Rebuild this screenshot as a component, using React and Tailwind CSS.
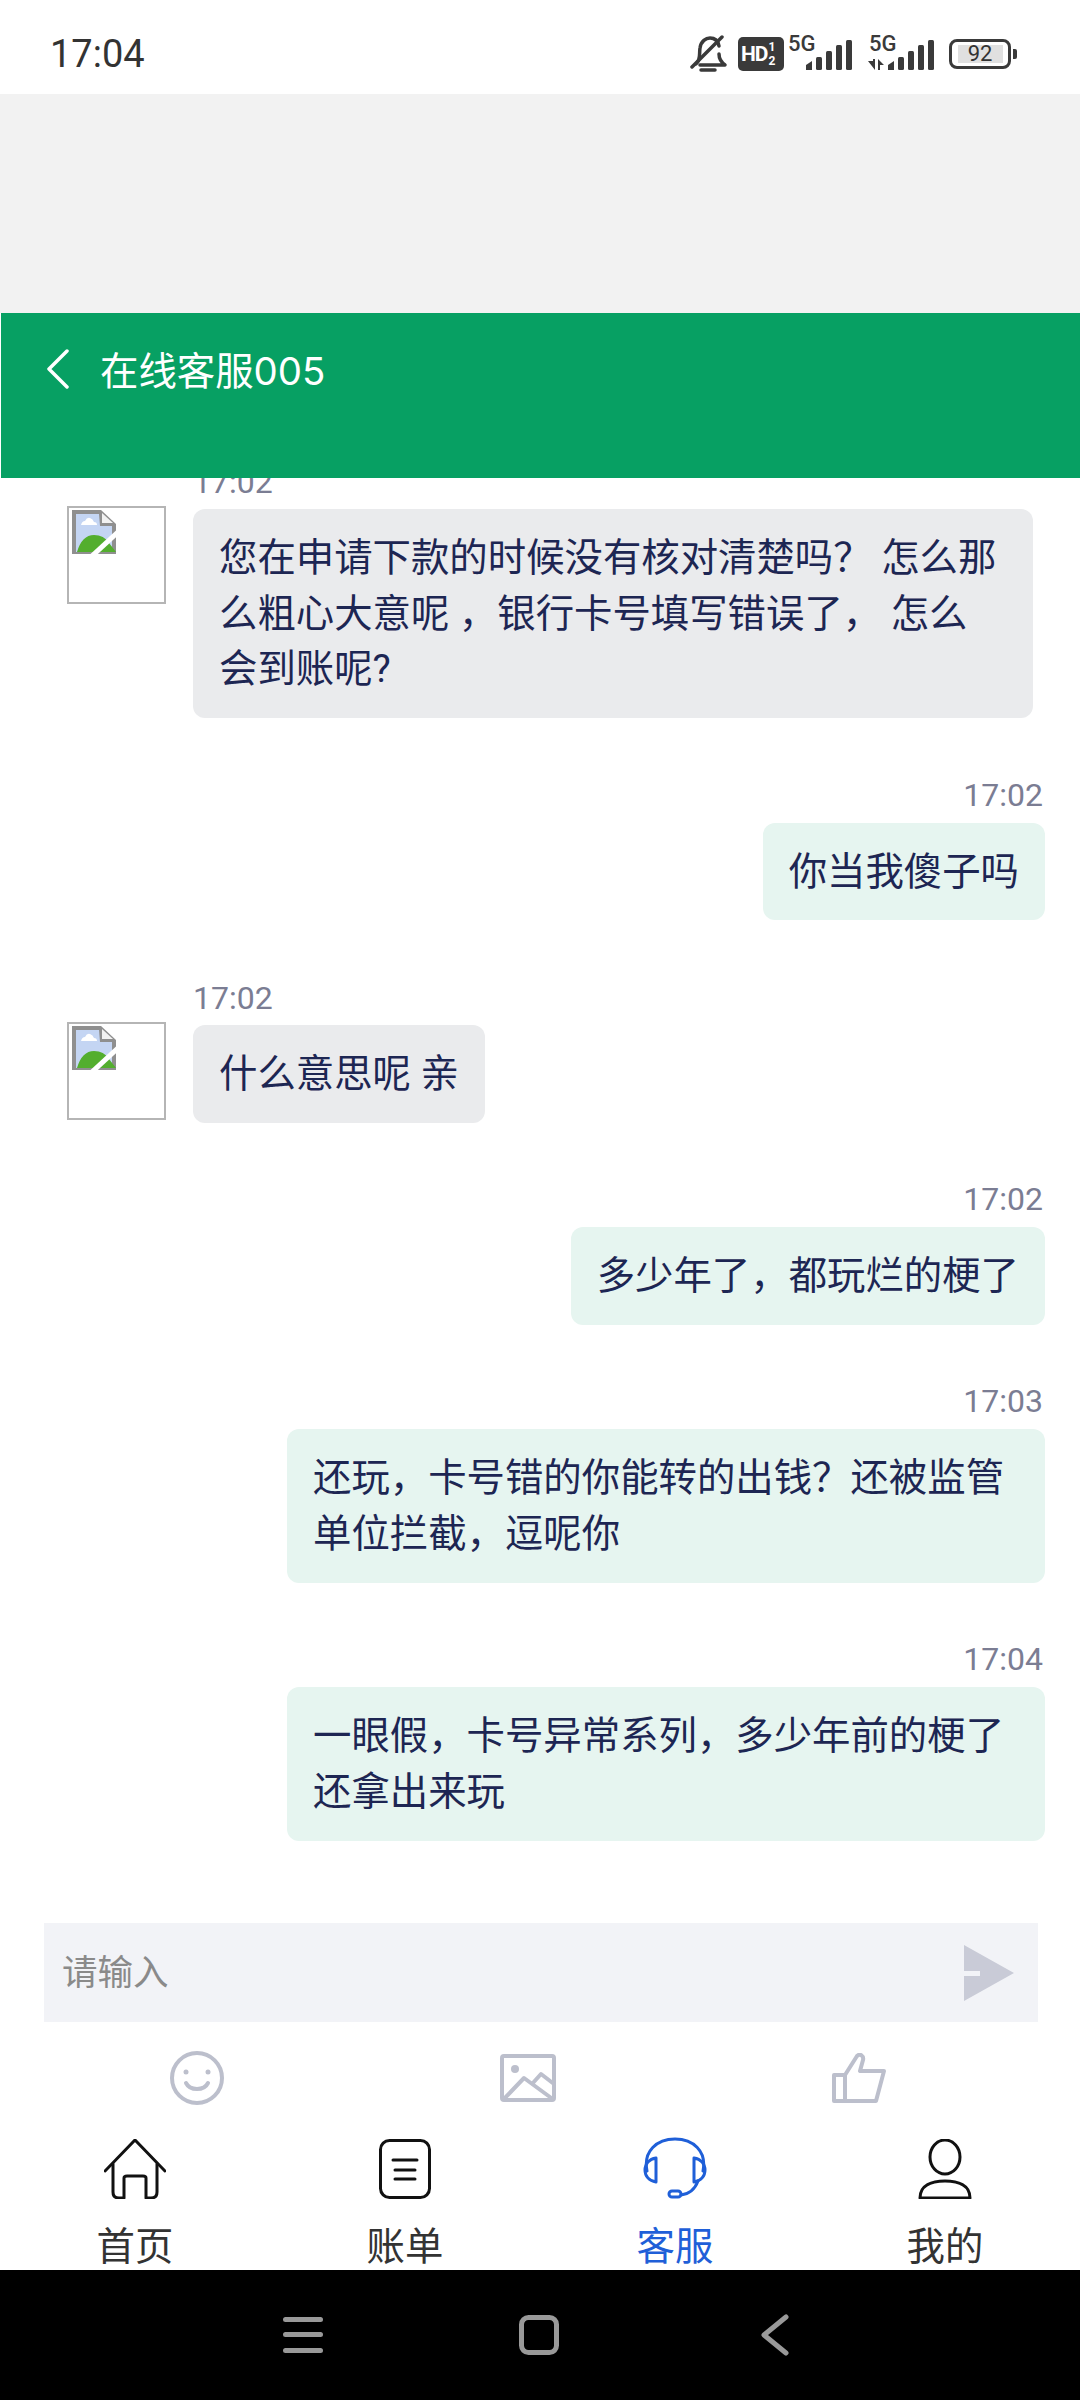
const font = { fontFamily: '"Roboto", "Noto Sans CJK SC", sans-serif' };

const BrokenImage = () => (
  <svg width="44" height="44" viewBox="0 0 44 44" className="block">
    <path d="M0 0H29L44 14V44H0Z" fill="#8f8f8f" />
    <path d="M4 4H27L28 16H40V42H4Z" fill="#c4d5f3" />
    <path d="M30 3L41 13H30Z" fill="#f2f2f2" />
    <path d="M9 15q1-4 4-4q2-4 5-3q3 1 4 4q3 0 3 3Z" fill="#fff" />
    <path d="M5 42Q10 25 22 25Q32 25 37 33L44 42Z" fill="#53ae2e" />
    <path d="M20 46L46 22" stroke="#fff" strokeWidth="5" />
  </svg>
);

const Avatar = () => (
  <div className="w-[99px] h-[98px] shrink-0 border-2 border-[#b5b5b5] pl-[3px] pt-[2px] bg-white">
    <BrokenImage />
  </div>
);

const Time = ({ children, className = "" }) => (
  <div className={`h-[36px] mb-[10px] text-[32px] leading-[36px] text-[#7b7d93] ${className}`}>{children}</div>
);

const LeftMsg = ({ time, children }) => (
  <div className="flex pl-[67px]">
    <div className="mt-[43px] mr-[27px]">
      <Avatar />
    </div>
    <div>
      <Time className="pt-[1px]">{time}</Time>
      <div className="w-fit max-w-[840px] rounded-[12px] bg-[#eaebed] px-[26px] py-[21px] text-[38.4px] leading-[55.7px] text-[#1d2653]">
        {children}
      </div>
    </div>
  </div>
);

const RightMsg = ({ time, children }) => (
  <div className="flex flex-col items-end pr-[35px]">
    <Time className="pr-[2px]">{time}</Time>
    <div className="max-w-[758px] rounded-[12px] bg-[#e6f5f0] px-[26px] py-[21px] text-[38.4px] leading-[55.7px] text-[#1d2653]">
      {children}
    </div>
  </div>
);

const Bars = ({ x = 0 }) => (
  <g fill="#3a3a3a" transform={`translate(${x} 0)`}>
    <path d="M0 30V25L6 21V30Z" />
    <rect x="10" y="17" width="6" height="13" rx="1.5" />
    <rect x="20" y="11" width="6" height="19" rx="1.5" />
    <rect x="30" y="5" width="6" height="25" rx="1.5" />
    <rect x="40" y="0" width="6" height="30" rx="1.5" />
  </g>
);

const StatusBar = () => (
  <div className="h-[94px] bg-white flex items-center justify-between pl-[50px] pr-[63px] pt-[14px]">
    <span className="text-[38px] leading-[44px] text-[#333]">17:04</span>
    <div className="flex items-center">
      <svg width="38" height="40" viewBox="0 0 38 40" fill="none" stroke="#3a3a3a" strokeWidth="3.5" strokeLinecap="round" strokeLinejoin="round">
        <path d="M6 30C11 26 9 20 10 14C11 7 16 4 20 4C25 4 28 7 29 12" />
        <path d="M29 20C29 24 31 28 35 31L10 31" />
        <path d="M11 36H25" />
        <path d="M2 33L32 3" />
      </svg>
      <div className="ml-[10px] flex h-[34px] w-[46px] items-center rounded-[5px] bg-[#3a3a3a] pl-[3px] text-white">
        <span className="text-[21px] font-bold leading-none tracking-[-1px]">HD</span>
        <span className="ml-[1px] flex flex-col text-[12px] font-bold leading-[14px]">
          <span>1</span>
          <span>2</span>
        </span>
      </div>
      <div className="relative ml-[4px] h-[34px] w-[66px]">
        <span className="absolute left-0 -top-[3px] text-[22px] font-medium leading-[20px] text-[#3a3a3a]">5G</span>
        <svg className="absolute left-[18px] top-[3px]" width="48" height="31" viewBox="0 0 48 31">
          <Bars />
        </svg>
      </div>
      <div className="relative ml-[14px] h-[34px] w-[66px]">
        <span className="absolute left-[1px] -top-[3px] text-[22px] font-medium leading-[20px] text-[#3a3a3a]">5G</span>
        <svg className="absolute left-0 top-[22px]" width="18" height="12" viewBox="0 0 18 12" fill="#3a3a3a">
          <path d="M0 2H5V0H7V11Z" />
          <path d="M10 11V0L16 6H12V11Z" />
        </svg>
        <svg className="absolute left-[20px] top-[3px]" width="48" height="31" viewBox="0 0 48 31">
          <Bars />
        </svg>
      </div>
      <div className="ml-[15px] flex h-[30px] w-[62px] items-center justify-center rounded-[8px] border-[3px] border-[#3a3a3a]">
        <span className="flex h-[18px] w-[45px] items-center justify-center bg-[#e0e0e0] text-[22px] leading-none text-[#333]">92</span>
      </div>
      <div className="ml-[2px] h-[10px] w-[4px] rounded-r-[2px] bg-[#3a3a3a]" />
    </div>
  </div>
);

const Header = () => (
  <div className="h-[165px] ml-[1px] bg-[#07a063] flex items-start pl-[45px] pt-[36px] text-white">
    <svg width="24" height="40" viewBox="0 0 24 40" fill="none" stroke="#fff" strokeWidth="3.5" strokeLinecap="round" strokeLinejoin="round">
      <path d="M21 2L3 20L21 38" />
    </svg>
    <span className="ml-[30px] font-['Inter','Noto_Sans_CJK_SC',sans-serif] text-[38.4px] leading-[44px]">在线客服005</span>
  </div>
);

const InputBar = () => (
  <div className="ml-[44px] w-[994px] h-[99px] bg-[#f2f3f7] flex items-center justify-between pl-[18px] pr-[24px]">
    <span className="text-[35.5px] leading-[40px] text-[#8a8a8a]">请输入</span>
    <svg width="50" height="56" viewBox="0 0 50 56">
      <path d="M0 0L50 28L0 56V31H16V26H0Z" fill="#c9cbd7" />
    </svg>
  </div>
);

const ActionRow = () => (
  <div className="h-[114px] grid grid-cols-3 w-[993px] ml-[31px] items-center pb-[3px]">
    <div className="flex justify-center">
      <svg width="54" height="54" viewBox="0 0 54 54" fill="none" stroke="#bcbfcc" strokeWidth="4" strokeLinecap="round">
        <circle cx="27" cy="27" r="25" />
        <path d="M16 32C20 40 34 40 38 32" />
        <circle cx="16" cy="21" r="2.5" fill="#bcbfcc" stroke="none" />
        <circle cx="38" cy="21" r="2.5" fill="#bcbfcc" stroke="none" />
      </svg>
    </div>
    <div className="flex justify-center">
      <svg width="56" height="48" viewBox="0 0 56 48" fill="none" stroke="#bcbfcc" strokeWidth="4" strokeLinejoin="round">
        <rect x="2" y="2" width="52" height="44" rx="2" />
        <path d="M3 46L24 24L54 46" />
        <path d="M32 30L41 20L54 30" />
        <circle cx="15" cy="15" r="4" fill="#bcbfcc" stroke="none" />
      </svg>
    </div>
    <div className="flex justify-center">
      <svg width="54" height="50" viewBox="0 0 54 50" fill="none" stroke="#bcbfcc" strokeWidth="4" strokeLinejoin="round">
        <path d="M2 22H13V48H2Z" />
        <path d="M13 22L25 3C28 0 32 3 31 7L28 18H52L44 48H13" />
      </svg>
    </div>
  </div>
);

const tabs = [
  {
    label: "首页",
    color: "text-[#333]",
    icon: (
      <svg width="62" height="60" viewBox="0 0 62 60" fill="none" stroke="#111" strokeWidth="3" strokeLinecap="round" strokeLinejoin="round">
        <path d="M1 32L31 1L61 32" />
        <path d="M9 25V53Q9 59 15 59H20V39Q20 37 23 37H39Q42 37 42 39V59H47Q53 59 53 53V25" />
      </svg>
    ),
  },
  {
    label: "账单",
    color: "text-[#333]",
    icon: (
      <svg width="52" height="60" viewBox="0 0 52 60" fill="none" stroke="#111" strokeWidth="3" strokeLinecap="round">
        <rect x="1.5" y="1.5" width="49" height="57" rx="9" />
        <path d="M14 21H38M16 31H36M16 40H36" />
      </svg>
    ),
  },
  {
    label: "客服",
    color: "text-[#1f5fd8]",
    icon: (
      <svg width="64" height="62" viewBox="0 0 64 62" fill="none" stroke="#1f5fd8" strokeWidth="3" strokeLinecap="round" strokeLinejoin="round">
        <path d="M4 34C0 14 14 2 32 2C50 2 64 14 60 34" />
        <path d="M13 21V45C6 44 2 39 2 33C2 27 6 22 13 21Z" />
        <path d="M51 21V45C58 44 62 39 62 33C62 27 58 22 51 21Z" />
        <path d="M55 44C52 52 46 57 38 58" />
        <rect x="26" y="54" width="12" height="6" rx="3" />
      </svg>
    ),
  },
  {
    label: "我的",
    color: "text-[#333]",
    icon: (
      <svg width="54" height="60" viewBox="0 0 54 60" fill="none" stroke="#111" strokeWidth="3" strokeLinejoin="round">
        <ellipse cx="27" cy="18" rx="15" ry="17" />
        <path d="M2 59C2 46 14 42 27 42C40 42 52 46 52 59Z" />
      </svg>
    ),
  },
];

const TabBar = () => (
  <div className="h-[134px] grid grid-cols-4 overflow-hidden">
    {tabs.map((t) => (
      <div key={t.label} className="flex flex-col items-center">
        <div className="h-[63px] flex items-end">{t.icon}</div>
        <span className={`mt-[26px] text-[38.4px] leading-[44px] ${t.color}`}>{t.label}</span>
      </div>
    ))}
  </div>
);

const NavBar = () => (
  <div className="h-[130px] bg-black flex items-center justify-center">
    <div className="flex items-center -ml-[2px]">
      <div className="w-[236px] flex justify-center">
        <svg width="40" height="38" viewBox="0 0 40 38" fill="#999">
          <rect y="1" width="40" height="5" rx="2.5" />
          <rect y="16" width="40" height="5" rx="2.5" />
          <rect y="32" width="40" height="5" rx="2.5" />
        </svg>
      </div>
      <div className="w-[236px] flex justify-center">
        <svg width="40" height="40" viewBox="0 0 40 40" fill="none" stroke="#999" strokeWidth="5">
          <rect x="2.5" y="2.5" width="35" height="35" rx="7" />
        </svg>
      </div>
      <div className="w-[236px] flex justify-center">
        <svg width="28" height="42" viewBox="0 0 28 42" fill="none" stroke="#999" strokeWidth="5" strokeLinecap="round" strokeLinejoin="round">
          <path d="M25 3L3 21L25 39" />
        </svg>
      </div>
    </div>
  </div>
);

export default function App() {
  return (
    <div className="w-[1080px] h-[2400px] bg-white overflow-hidden flex flex-col" style={font}>
      <StatusBar />
      <div className="h-[219px] bg-[#f2f2f2]" />
      <Header />
      <div className="h-[1445px] overflow-hidden">
        <div className="-mt-[15px] flex flex-col gap-[58.5px]">
          <LeftMsg time="17:02">
            您在申请下款的时候没有核对清楚吗？ 怎么那么粗心大意呢 ，银行卡号填写错误了， 怎么
            <br />
            会到账呢?
          </LeftMsg>
          <RightMsg time="17:02">你当我傻子吗</RightMsg>
          <LeftMsg time="17:02">什么意思呢 亲</LeftMsg>
          <RightMsg time="17:02">多少年了，都玩烂的梗了</RightMsg>
          <RightMsg time="17:03">还玩，卡号错的你能转的出钱？还被监管单位拦截，逗呢你</RightMsg>
          <RightMsg time="17:04">一眼假，卡号异常系列，多少年前的梗了还拿出来玩</RightMsg>
        </div>
      </div>
      <InputBar />
      <ActionRow />
      <TabBar />
      <NavBar />
    </div>
  );
}
